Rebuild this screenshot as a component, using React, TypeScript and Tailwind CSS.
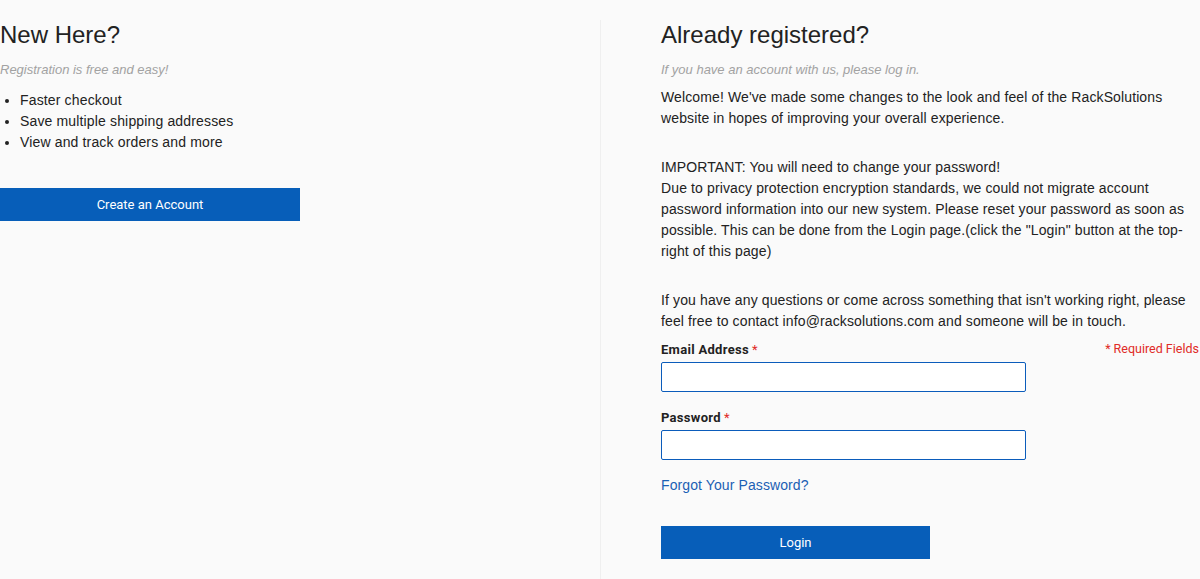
const perks = [
  "Faster checkout",
  "Save multiple shipping addresses",
  "View and track orders and more",
]

function Label({ text }: { text: string }) {
  return (
    <label className="block font-['Roboto',sans-serif] text-[13px] font-bold leading-[18px] tracking-[0.3px] text-[#222]">
      {text}
      <span className="ml-[3px] font-normal text-[#e02b27]">*</span>
    </label>
  )
}

export default function App() {
  return (
    <div className="min-h-[579px] w-[1200px] bg-[#fafafa] font-['Liberation_Sans',Arial,sans-serif] text-[#222]">
      <div className="flex pt-[20px]">
        {/* New customers */}
        <div className="w-[600px] shrink-0">
          <h2 className="text-[24px] leading-[28px] font-normal text-[#222] mt-[1px]">New Here?</h2>
          <p className="mt-[12px] text-[13px] leading-[18px] italic text-[#a2a2a2]">
            Registration is free and easy!
          </p>
          <ul className="mt-[11px] pl-[20px] list-disc text-[14px] leading-[21px] tracking-[0.15px] marker:text-[#222]">
            {perks.map((p) => (
              <li key={p}>{p}</li>
            ))}
          </ul>
          <button className="mt-[35px] h-[33px] w-[300px] bg-[#075eb9] font-['Roboto',sans-serif] text-[13px] text-white">
            Create an Account
          </button>
        </div>

        {/* Returning customers */}
        <div className="flex-1 border-l border-[#efefef] pl-[60px] pb-[20px]">
          <h2 className="text-[24px] leading-[28px] font-normal text-[#222] mt-[1px]">Already registered?</h2>
          <p className="mt-[12px] text-[13px] leading-[18px] italic text-[#a2a2a2]">
            If you have an account with us, please log in.
          </p>
          <div className="mt-[8px] text-[14px] leading-[21px] tracking-[0.12px]">
            <p>
              Welcome! We've made some changes to the look and feel of the RackSolutions website in hopes of
              improving your overall experience.
            </p>
            <p className="mt-[28px]">
              IMPORTANT: You will need to change your password!
              <br />
              Due to privacy protection encryption standards, we could not migrate account password information into
              our new system. Please reset your password as soon as possible. This can be done from the Login
              page.(click the "Login" button at the top-right of this page)
            </p>
            <p className="mt-[28px]">
              If you have any questions or come across something that isn't working right, please feel free to
              contact info@racksolutions.com and someone will be in touch.
            </p>
          </div>

          <form className="mt-[9px]">
            <div className="flex items-start justify-between">
              <Label text="Email Address" />
              <span className="font-['Roboto',sans-serif] text-[12.5px] leading-[14px] text-[#e02b27] mr-[1px] mt-[1px]">
                * Required Fields
              </span>
            </div>
            <input
              type="email"
              className="mt-[3px] block h-[30px] w-[365px] rounded-[2px] border border-[#0b5cbb] bg-white"
            />
            <div className="mt-[17px]">
              <Label text="Password" />
            </div>
            <input
              type="password"
              className="mt-[3px] block h-[30px] w-[365px] rounded-[2px] border border-[#0b5cbb] bg-white"
            />
            <a href="#" className="mt-[15px] block text-[14px] leading-[21px] tracking-[0.1px] text-[#1a5fb4]">
              Forgot Your Password?
            </a>
            <button
              type="button"
              className="mt-[30px] h-[33px] w-[269px] bg-[#075eb9] font-['Roboto',sans-serif] text-[13px] text-white"
            >
              Login
            </button>
          </form>
        </div>
      </div>
    </div>
  )
}
